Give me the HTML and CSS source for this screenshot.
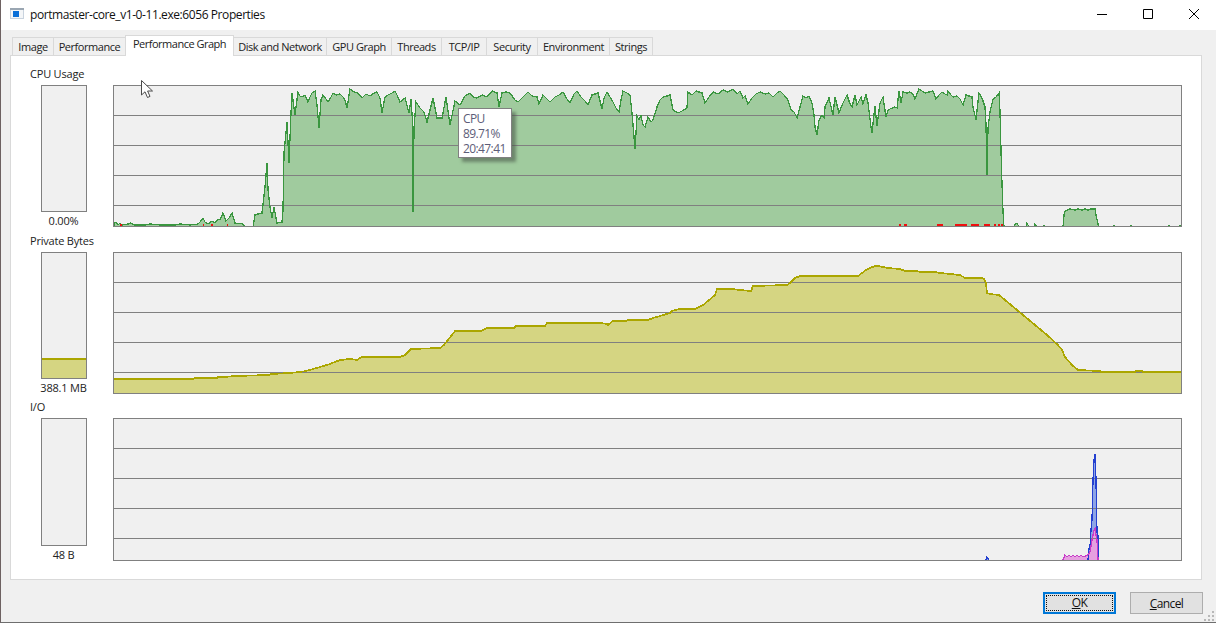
FILE: index.html
```html
<!DOCTYPE html>
<html lang="en">
<head>
<meta charset="utf-8">
<title>portmaster-core_v1-0-11.exe:6056 Properties</title>
<link rel="stylesheet" href="styles.css">
</head>
<body>
<div class="window">
  <header class="titlebar">
    <svg class="app-icon" width="14" height="12" viewBox="0 0 14 12"><rect x="0" y="0" width="14" height="11" fill="#c9d3de"/><rect x="1" y="2" width="12" height="8" fill="#f4f6f8"/><rect x="3" y="3" width="6" height="6" fill="#0a6fd8"/><rect x="0" y="0" width="14" height="2" fill="#9aa6b2"/></svg>
    <span class="title">portmaster-core_v1-0-11.exe:6056 Properties</span>
    <div class="controls">
      <svg width="46" height="30" viewBox="0 0 46 30"><path class="glyph" d="M18 14.5h10"/></svg>
      <svg width="46" height="30" viewBox="0 0 46 30"><path class="glyph" d="M18.5 9.5h9v9h-9z"/></svg>
      <svg width="46" height="30" viewBox="0 0 46 30"><path class="glyph" d="M18 9l10 10M28 9l-10 10"/></svg>
    </div>
  </header>

  <nav class="tabs">
    <span class="tab tab-image">Image</span>
    <span class="tab tab-perf">Performance</span>
    <span class="tab active">Performance Graph</span>
    <span class="tab tab-disk">Disk and Network</span>
    <span class="tab tab-gpu">GPU Graph</span>
    <span class="tab tab-threads">Threads</span>
    <span class="tab tab-tcp">TCP/IP</span>
    <span class="tab tab-security">Security</span>
    <span class="tab tab-env">Environment</span>
    <span class="tab tab-strings">Strings</span>
  </nav>

  <main class="panel">
    <section class="row row-cpu">
      <div class="label">CPU Usage</div>
      <div class="meter-col">
        <div class="meter"></div>
        <div class="value">0.00%</div>
      </div>
      <div class="graph">
        <svg class="plot" viewBox="114 86 1067 140" width="1067" height="140">
          <path class="cpu-fill" d="M114 226V223L116 222 118 225 120 223 122 225 128 224 131 223 134 225 145 225 150 224 160 225 175 225 180 224 190 225 198 224 200 222 203 218 205 222 208 224 212 221 215 223 218 219 220 220 223 213 226 221 229 218 232 213 235 223 243 224 245 226 253 226 255 215 258 214 262 213 265 187 267 163 268 190 270 207 272 218 274 207 277 223 282 222 283 210 284 153 287 122 289 163 291 113 292 93 295 115 298 92 300 96 302 97 305 95 308 102 310 97 312 93 315 91 317 105 319 128 321 100 323 95 326 99 328 102 331 97 333 93 336 95 340 94 343 97 345 100 347 108 350 89 354 92 358 93 362 98 366 94 370 96 374 93 377 92 380 98 382 113 385 97 388 95 392 93 395 91 398 97 400 102 405 98 409 113 411 99 413 128 413 212 414 128 416 102 420 108 424 112 427 122 430 110 433 98 437 118 442 118 446 97 450 125 455 101 460 105 465 96 470 93 473 97 477 98 482 95 487 97 492 91 497 93 499 107 502 93 506 92 510 93 515 100 518 102 523 97 528 92 532 96 537 97 539 104 543 95 547 99 550 102 555 97 559 95 563 92 567 99 570 103 574 94 577 91 581 97 585 101 588 105 592 95 595 94 598 93 602 109 604 98 607 92 610 97 613 102 616 108 619 112 621 100 623 91 627 93 630 95 632 113 635 149 637 116 639 120 641 116 643 125 645 127 648 117 651 122 653 120 657 107 660 100 663 97 667 96 670 95 673 110 678 113 682 111 687 108 688 92 692 95 696 91 702 93 705 103 709 97 713 92 718 94 723 90 728 92 733 89 737 94 740 91 743 98 745 96 748 104 752 98 756 94 760 92 765 94 769 93 773 97 777 93 780 91 784 95 788 100 791 110 794 112 797 118 800 107 803 96 806 98 809 96 812 103 814 115 815 127 817 135 819 120 822 115 824 118 825 107 829 98 833 115 835 97 839 113 843 103 847 95 850 104 852 107 855 95 857 105 861 97 863 104 866 95 868 103 871 127 872 133 875 106 877 126 880 103 883 97 886 117 888 110 892 108 895 107 897 108 899 91 901 103 903 92 907 93 910 92 913 94 915 99 919 89 922 91 925 93 929 92 933 91 936 99 939 95 942 92 945 94 947 95 948 91 951 95 953 97 957 96 960 99 963 105 966 95 969 96 972 97 973 107 976 120 979 93 982 98 985 107 986 125 987 175 988 128 990 112 993 99 996 97 999 93 1000 112 1001 150 1002 184 1003 212 1004 226 1014 226 1015 224 1017 223 1019 226 1026 226 1027 223 1029 226 1034 226 1035 224 1037 226 1043 226 1044 225 1046 226 1063 226 1064 215 1065 211 1067 210 1070 209 1075 210 1078 209 1082 210 1085 209 1088 210 1091 209 1095 209 1096 215 1098 224 1099 226Z"/>
          <path class="grid" d="M114 115.5H1181M114 145.5H1181M114 175.5H1181M114 205.5H1181"/>
          <path class="cpu-line" d="M114 227V223L116 222 118 225 120 223 122 225 128 224 131 223 134 225 145 225 150 224 160 225 175 225 180 224 190 225 198 224 200 222 203 218 205 222 208 224 212 221 215 223 218 219 220 220 223 213 226 221 229 218 232 213 235 223 243 224 245 227 253 227 255 215 258 214 262 213 265 187 267 163 268 190 270 207 272 218 274 207 277 223 282 222 283 210 284 153 287 122 289 163 291 113 292 93 295 115 298 92 300 96 302 97 305 95 308 102 310 97 312 93 315 91 317 105 319 128 321 100 323 95 326 99 328 102 331 97 333 93 336 95 340 94 343 97 345 100 347 108 350 89 354 92 358 93 362 98 366 94 370 96 374 93 377 92 380 98 382 113 385 97 388 95 392 93 395 91 398 97 400 102 405 98 409 113 411 99 413 128 413 212 414 128 416 102 420 108 424 112 427 122 430 110 433 98 437 118 442 118 446 97 450 125 455 101 460 105 465 96 470 93 473 97 477 98 482 95 487 97 492 91 497 93 499 107 502 93 506 92 510 93 515 100 518 102 523 97 528 92 532 96 537 97 539 104 543 95 547 99 550 102 555 97 559 95 563 92 567 99 570 103 574 94 577 91 581 97 585 101 588 105 592 95 595 94 598 93 602 109 604 98 607 92 610 97 613 102 616 108 619 112 621 100 623 91 627 93 630 95 632 113 635 149 637 116 639 120 641 116 643 125 645 127 648 117 651 122 653 120 657 107 660 100 663 97 667 96 670 95 673 110 678 113 682 111 687 108 688 92 692 95 696 91 702 93 705 103 709 97 713 92 718 94 723 90 728 92 733 89 737 94 740 91 743 98 745 96 748 104 752 98 756 94 760 92 765 94 769 93 773 97 777 93 780 91 784 95 788 100 791 110 794 112 797 118 800 107 803 96 806 98 809 96 812 103 814 115 815 127 817 135 819 120 822 115 824 118 825 107 829 98 833 115 835 97 839 113 843 103 847 95 850 104 852 107 855 95 857 105 861 97 863 104 866 95 868 103 871 127 872 133 875 106 877 126 880 103 883 97 886 117 888 110 892 108 895 107 897 108 899 91 901 103 903 92 907 93 910 92 913 94 915 99 919 89 922 91 925 93 929 92 933 91 936 99 939 95 942 92 945 94 947 95 948 91 951 95 953 97 957 96 960 99 963 105 966 95 969 96 972 97 973 107 976 120 979 93 982 98 985 107 986 125 987 175 988 128 990 112 993 99 996 97 999 93 1000 112 1001 150 1002 184 1003 212 1004 227 1014 227 1015 224 1017 223 1019 227 1026 227 1027 223 1029 227 1034 227 1035 224 1037 227 1043 227 1044 225 1046 227 1063 227 1064 215 1065 211 1067 210 1070 209 1075 210 1078 209 1082 210 1085 209 1088 210 1091 209 1095 209 1096 215 1098 224 1099 227M1113 225.5h2M1130 225.5h2M1168 225.5h2M1179 225.5h2"/>
          <path class="cpu-red" d="M120 225h2M203 225h1M211 225h2M227 225h1M899 225h2M904 225h3M937 225h6M955 225h12M971 225h8M984 225h6M994 225h2M998 225h2M1001 225h2"/>
        </svg>
        <div class="tooltip">CPU<br>89.71%<br>20:47:41</div>
      </div>
    </section>

    <section class="row row-mem">
      <div class="label">Private Bytes</div>
      <div class="meter-col">
        <div class="meter"><div class="meter-level"></div></div>
        <div class="value">388.1 MB</div>
      </div>
      <div class="graph">
        <svg class="plot" viewBox="114 253 1067 140" width="1067" height="140">
          <path class="mem-fill" d="M114 393V379H193L195 378 217 378 218 377 225 377 235 376 269 375 271 374 290 373 300 372 306 371 320 367 330 364 340 360 350 359 357 360 362 357 400 357 405 355 408 352 411 349 440 348 444 345 448 340 452 335 455 331 481 331 487 328 514 328 516 326 545 326 547 323 600 323 607 324 608 325 613 321 626 321 628 320 648 320 653 318 660 316 670 313 672 311 680 309 695 309 703 305 708 301 715 295 717 289 732 289 740 290 751 291 753 286 787 285 790 283 795 278 800 276 858 276 862 273 866 270 870 268 875 266 878 266 888 268 900 269 905 271 916 271 920 272 935 272 940 273 950 274 960 275 965 278 982 278 984 279 986 283 987 293 990 294 999 295 1005 300 1017 310 1023 315 1035 325 1047 335 1058 345 1062 350 1065 357 1072 365 1078 370 1100 371 1101 372 1135 372 1136 371 1142 371 1143 372 1181 372V393Z"/>
          <path class="grid" d="M114 282.5H1181M114 312.5H1181M114 342.5H1181M114 372.5H1181"/>
          <path class="mem-line" d="M114 379H193L195 378 217 378 218 377 225 377 235 376 269 375 271 374 290 373 300 372 306 371 320 367 330 364 340 360 350 359 357 360 362 357 400 357 405 355 408 352 411 349 440 348 444 345 448 340 452 335 455 331 481 331 487 328 514 328 516 326 545 326 547 323 600 323 607 324 608 325 613 321 626 321 628 320 648 320 653 318 660 316 670 313 672 311 680 309 695 309 703 305 708 301 715 295 717 289 732 289 740 290 751 291 753 286 787 285 790 283 795 278 800 276 858 276 862 273 866 270 870 268 875 266 878 266 888 268 900 269 905 271 916 271 920 272 935 272 940 273 950 274 960 275 965 278 982 278 984 279 986 283 987 293 990 294 999 295 1005 300 1017 310 1023 315 1035 325 1047 335 1058 345 1062 350 1065 357 1072 365 1078 370 1100 371 1101 372 1135 372 1136 371 1142 371 1143 372 1181 372"/>
        </svg>
      </div>
    </section>

    <section class="row row-io">
      <div class="label">I/O</div>
      <div class="meter-col">
        <div class="meter"></div>
        <div class="value">48 B</div>
      </div>
      <div class="graph">
        <svg class="plot" viewBox="114 419 1067 141" width="1067" height="141">
          <path class="io-fill" d="M986 560L987 557 989 560ZM1088 560L1089 548 1090 547 1091 530 1092 520 1093 480 1094 460 1095 454 1096 480 1097 533 1098 535 1098 560Z"/>
          <path class="pink-fill" d="M1063 560L1065 555 1067 557 1069 555 1071 557 1073 555 1075 557 1077 555 1079 557 1081 555 1083 557 1085 556 1088 555 1090 552 1092 540 1094 530 1095 528 1096 535 1097 540 1098 560Z"/>
          <path class="grid" d="M114 448.5H1181M114 478.5H1181M114 508.5H1181M114 538.5H1181"/>
          <path class="io-line" d="M986 560L987 557 989 560M1088 560L1089 548 1090 547 1091 530 1092 520 1093 480 1094 460 1095 454 1096 480 1097 533 1098 535 1098 560"/>
          <path class="pink-line" d="M1063 560L1065 555 1067 557 1069 555 1071 557 1073 555 1075 557 1077 555 1079 557 1081 555 1083 557 1085 556 1088 555 1090 552 1092 540 1094 530 1095 528 1096 535 1097 540 1098 560"/>
        </svg>
      </div>
    </section>

    <svg class="cursor" width="15" height="20" viewBox="0 0 15 20"><path d="M1.5 1.5V16L5 12.8 7.5 18.5 10 17.4 7.6 12H12.5Z" fill="#fff" stroke="#4a4a4a" stroke-width="1"/></svg>
  </main>

  <footer class="actions">
    <button class="btn default" type="button"><span class="focus"><u>O</u>K</span></button>
    <button class="btn" type="button"><u>C</u>ancel</button>
    <svg class="grip" width="12" height="12" viewBox="0 0 12 12"><path fill="#b8b8b8" d="M8 1h2v2H8zM4 5h2v2H4zM8 5h2v2H8zM0 9h2v2H0zM4 9h2v2H4zM8 9h2v2H8z"/></svg>
  </footer>
</div>
</body>
</html>
```
FILE: styles.css
```css
* { box-sizing: border-box; }
html, body { margin: 0; padding: 0; }
body {
  width: 1216px;
  height: 623px;
  overflow: hidden;
  font-family: "Open Sans", "Noto Sans", "Liberation Sans", sans-serif;
  font-size: 11px;
  color: #1a1a1a;
}
.window {
  width: 1216px;
  height: 623px;
  background: #f0f0f0;
  border-left: 1px solid #6e6262;
  border-bottom: 1px solid #6e6e6e;
  display: flex;
  flex-direction: column;
  position: relative;
}
.titlebar {
  height: 30px;
  flex: none;
  background: #fff;
  display: flex;
  align-items: center;
  padding-left: 9px;
}
.app-icon { margin-right: 6px; margin-top: -2px; }
.title { font-size: 12px; letter-spacing: -0.42px; color: #111; margin-top: -1px; }
.controls { margin-left: auto; display: flex; margin-right: -1px; }
.glyph { fill: none; stroke: #000; stroke-width: 1; }

.tabs {
  height: 25px;
  flex: none;
  padding: 5px 0 0 11px;
  display: flex;
  align-items: flex-end;
  position: relative;
  z-index: 1;
}
.tab {
  height: 18px;
  line-height: 17px;
  text-align: center;
  background: #f0f0f0;
  border: 1px solid #d9d9d9;
  border-bottom: 0;
  margin-left: -1px;
  color: #222;
  letter-spacing: -0.45px;
  white-space: nowrap;
}
.tab:first-child { margin-left: 0; }
.tab-image { width: 42px; }
.tab-perf { width: 73px; }
.tab-disk { width: 94px; }
.tab-gpu { width: 66px; }
.tab-threads { width: 51px; }
.tab-tcp { width: 46px; }
.tab-security { width: 52px; }
.tab-env { width: 73px; }
.tab-strings { width: 44px; }
.tab.active {
  width: 109px;
  height: 21px;
  line-height: 15px;
  letter-spacing: -0.5px;
  background: #fff;
  margin-bottom: -1px;
  position: relative;
  z-index: 1;
}
.panel {
  width: 1192px;
  height: 525px;
  flex: none;
  margin-left: 9px;
  padding: 11px 0 0 19px;
  background: #fff;
  border: 1px solid #d9d9d9;
  position: relative;
}
.row {
  display: grid;
  grid-template-columns: 83px 1069px;
  grid-template-rows: 18px 142px;
}
.row-cpu { margin-bottom: 7px; }
.row-mem { margin-bottom: 6px; }
.row-io { grid-template-rows: 18px 143px; }
.label {
  grid-column: 1 / 3;
  line-height: 13px;
  letter-spacing: -0.2px;
  color: #222;
}
.meter-col {
  padding-left: 11px;
  padding-right: 26px;
  display: flex;
  flex-direction: column;
}
.meter {
  flex: 1;
  background: #f0f0f0;
  border: 1px solid #808080;
  display: flex;
  flex-direction: column;
  justify-content: flex-end;
}
.meter-level {
  height: 20px;
  background: #d5d582;
  border-top: 2px solid #aba600;
}
.value {
  height: 15px;
  line-height: 17px;
  margin-left: -1px;
  letter-spacing: -0.2px;
  text-align: center;
  white-space: nowrap;
  color: #222;
}
.graph {
  border: 1px solid #808080;
  background: #f0f0f0;
  position: relative;
}
.plot { display: block; shape-rendering: crispEdges; }
.grid { fill: none; stroke: #808080; stroke-width: 1; }
.cpu-fill { fill: #a0cb9e; }
.cpu-line { fill: none; stroke: #3a963f; stroke-width: 1.3; shape-rendering: crispEdges; }
.cpu-red { fill: none; stroke: #ee1010; stroke-width: 2; }
.mem-fill { fill: #d5d582; }
.mem-line { fill: none; stroke: #aba600; stroke-width: 1.7; shape-rendering: crispEdges; }
.io-fill { fill: #8ea5e6; }
.io-line { fill: none; stroke: #2440d0; stroke-width: 1.3; shape-rendering: crispEdges; }
.pink-fill { fill: #e6a0e0; }
.pink-line { fill: none; stroke: #c83cc8; stroke-width: 1.3; shape-rendering: crispEdges; }

.tooltip {
  position: absolute;
  left: 344px;
  top: 22px;
  width: 54px;
  height: 50px;
  padding: 2px 0 0 4px;
  background: #fff;
  border: 1px solid #808080;
  box-shadow: 4px 4px 3px rgba(70, 80, 70, .55);
  font-size: 12px;
  letter-spacing: -0.6px;
  line-height: 15px;
  color: #5d5d78;
  white-space: nowrap;
}
.cursor {
  position: absolute;
  left: 129px;
  top: 23px;
}
.actions {
  flex: 1;
  display: flex;
  gap: 14px;
  align-items: flex-start;
  padding: 12px 0 0 1042px;
  position: relative;
}
.btn {
  width: 73px;
  height: 22px;
  padding: 0;
  background: #e1e1e1;
  border: 1px solid #adadad;
  font: 12px "Open Sans", "Noto Sans", sans-serif;
  letter-spacing: -0.6px;
  color: #111;
}
.btn.default { border: 2px solid #0078d7; padding: 1px; }
.focus {
  display: block;
  height: 100%;
  line-height: 14px;
  border: 1px dotted #111;
}
.grip { position: absolute; right: 0; bottom: 0; }
```
